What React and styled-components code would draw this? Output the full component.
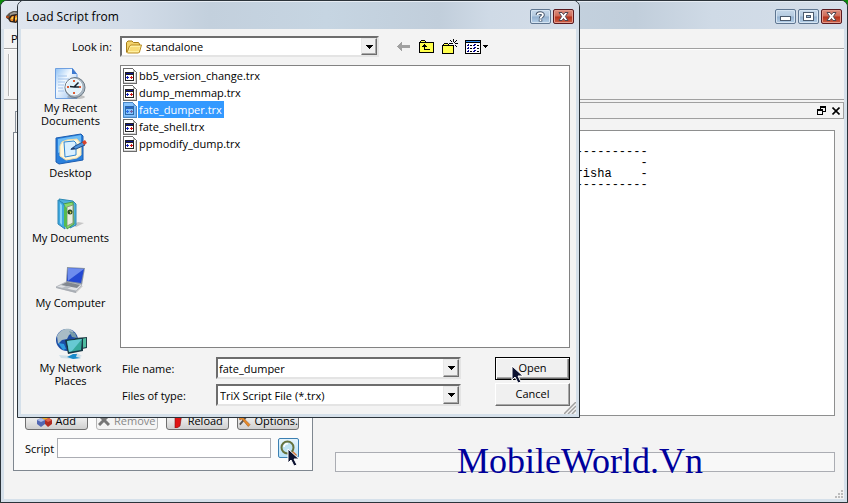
import React, { useState } from 'react';
import styled, { createGlobalStyle } from 'styled-components';

const GlobalStyle = createGlobalStyle`
  * {
    box-sizing: border-box;
  }

  body {
    margin: 0;
    background: #0a8a0a;
    color: #000;
    font-family: 'Open Sans', 'Liberation Sans', sans-serif;
    font-size: 11px;
    line-height: 13px;
  }

  button, input, select {
    margin: 0;
    padding: 0;
    font: inherit;
    color: inherit;
  }
`;

const Desktop = styled.div`
  position: relative;
  display: flex;
  min-height: 100vh;
`;

/* window frame */
const Window = styled.section`
  display: flex;
  flex-direction: column;
  flex: 1;
  border: 1px solid #2b333a;
  border-radius: 7px 7px 0 0;
  background: #d5e0ea;
  overflow: hidden;
`;

const DialogWindow = styled(Window)` /* dialog over the main window */
  position: absolute;
  top: 0;
  left: 17px;
  width: 563px;
  height: 418px;
`;

const TitleBar = styled.header`
  display: flex;
  align-items: center;
  gap: 2px;
  height: 28px;
  padding: 3px 5px 0 8px;
  box-shadow: inset 0 1px #e6ecf3;
  background: linear-gradient(90deg, #dfe5ee 0, #d2dce8 20%, #c3d0dd 34%, #c6d5e2 55%, #c1cedb 75%, #cfdae6 84%, #d5dee9 100%);
`;

const Title = styled.h1`
  flex: 1;
  margin: 0;
  font-size: 12px;
  font-weight: 400;
`;

const TitleButton = styled.button`
  display: flex;
  align-items: center;
  justify-content: center;
  width: 21px;
  height: 15px;
  border: 1px solid ${(props) => (props.$close ? '#5a1a20' : '#5f7691')};
  border-radius: 2px;
  box-shadow: inset 0 0 0 1px ${(props) => (props.$close ? '#e39a8c' : '#d5e4f2')};
  background: ${(props) =>
    props.$close
      ? 'linear-gradient(#dc8e7f 0, #cf6a56 48%, #b5301a 52%, #cc6046 100%)'
      : 'linear-gradient(#c6d8ea 0, #b4cae0 48%, #93b0cf 52%, #b5d0e8 100%)'};
`;

const WindowBody = styled.div`
  display: flex;
  flex-direction: column;
  flex: 1;
  margin: 0 3px 3px;
  background: #f3f3f3;
`;

/* main window */
const MenuBar = styled.nav`
  height: 20px;
  padding: 3px 7px;
  border-bottom: 1px solid #a0a0a0;
`;

const MenuItem = styled.button`
  border: 0;
  background: none;
`;

const ToolBar = styled.div`
  height: 51px;
  padding: 4px;
  border-top: 1px solid #fff;
  border-bottom: 1px solid #a0a0a0;
`;

const ToolBarGrip = styled.div`
  width: 2px;
  height: 42px;
  border-left: 1px solid #b4b4b4;
  border-right: 1px solid #fff;
`;

const Workspace = styled.div`
  position: relative;
  display: flex;
  flex: 1;
`;

const SidePanel = styled.div`
  display: flex;
  flex-direction: column;
  width: 300px;
  margin: 11px 9px 28px;
`;

const Tab = styled.div`
  width: 80px;
  height: 21px;
  margin-left: 2px;
  border: 1px solid #8a929c;
  border-bottom: 0;
  background: #eee;
`;

const TabPane = styled.div`
  display: flex;
  flex-direction: column;
  justify-content: flex-end;
  gap: 8px;
  flex: 1;
  padding: 0 13px 12px 11px;
  border: 1px solid #7f8790;
  background: #fbfbfb;
`;

const ButtonRow = styled.div`
  display: grid;
  grid-template-columns: repeat(4, 1fr);
  gap: 8px;
`;

const ActionButton = styled.button`
  display: flex;
  align-items: center;
  justify-content: center;
  gap: 4px;
  height: 20px;
  overflow: hidden;
  border: 1px solid #6f6f6f;
  border-radius: 3px;
  background: linear-gradient(#f4f4f4, #e8e8e8 50%, #cfcfcf);
  white-space: nowrap;

  &:disabled {
    border-color: #b5b5b5;
    background: #f4f4f4;
    color: #888;
  }
`;

const ScriptRow = styled.div`
  display: flex;
  align-items: center;
`;

const ScriptLabel = styled.label`
  width: 32px;
`;

const ScriptInput = styled.input`
  flex: 1;
  min-width: 0;
  height: 20px;
  padding: 0 4px;
  border: 1px solid #abadb3;
  background: #fff;
`;

const BrowseButton = styled.button`
  display: flex;
  align-items: center;
  justify-content: center;
  width: 21px;
  height: 20px;
  margin-left: 7px;
  border: 1px solid #3c7fb1;
  border-radius: 2px;
  background: linear-gradient(#e6f5fd, #b8e2f8);
`;

const OutputPanel = styled.div`
  display: flex;
  flex-direction: column;
  flex: 1;
  padding-top: 2px;
`;

const DockTitle = styled.div`
  display: flex;
  align-items: center;
  justify-content: flex-end;
  gap: 6px;
  height: 17px;
  padding-right: 3px;
  border: 1px solid #a0a0a0;
`;

const DockButton = styled.button`
  display: flex;
  border: 0;
  background: none;
`;

const Console = styled.pre`
  flex: 1;
  margin: 11px 9px 0 13px;
  padding: 16px 2px;
  border: 1px solid #8e8f8f;
  background: #fff;
  font-family: 'Liberation Mono', monospace;
  font-size: 12px;
  line-height: 11px;
`;

const Progress = styled.div`
  height: 20px;
  margin: 36px 9px 27px 13px;
  border: 1px solid #abadb3;
  background: #f8f8f8;
`;

const CornerGrip = styled.svg`
  position: absolute;
  right: 1px;
  bottom: 1px;
`;

/* file dialog */
const LookInRow = styled.div`
  display: flex;
  align-items: center;
  margin-top: 7px;
`;

const LookInLabel = styled.label`
  width: 99px;
  padding-right: 8px;
  text-align: right;
`;

const ComboFrame = styled.div`
  display: flex;
  align-items: center;
  flex: ${(props) => props.$flex || '1'};
  height: ${(props) => props.$height || '22px'};
  padding-left: ${(props) => props.$indent || '1px'};
  border: 2px solid;
  border-color: #6d6d6d #e4e4e4 #e4e4e4 #6d6d6d;
  background: #fff;
`;

const ComboSelect = styled.select`
  flex: 1;
  align-self: stretch;
  min-width: 0;
  padding-left: ${(props) => props.$indent || '1px'};
  border: 0;
  outline: 0;
  appearance: none;
  background: transparent;
`;

const ComboInput = styled.input`
  flex: 1;
  align-self: stretch;
  min-width: 0;
  border: 0;
  outline: 0;
  background: transparent;
`;

const ComboArrow = styled.span`
  display: flex;
  align-items: center;
  justify-content: center;
  align-self: stretch;
  width: 16px;
  border: 1px solid;
  border-color: #e8e8e8 #6d6d6d #6d6d6d #e8e8e8;
  box-shadow: inset -1px -1px #a8a8a8;
  background: #f0f0f0;
  pointer-events: none;
`;

const FolderTools = styled.div`
  display: flex;
  margin-left: 13px;
`;

const FolderToolButton = styled.button`
  display: flex;
  align-items: center;
  justify-content: center;
  gap: 2px;
  width: ${(props) => (props.$wide ? '30px' : '23px')};
  height: 21px;
  border: 0;
  background: none;
`;

const DialogMain = styled.div`
  display: flex;
  flex: 1;
  margin-top: 8px;
`;

const Places = styled.nav`
  display: flex;
  flex-direction: column;
  width: 99px;
  padding-top: 3px;
`;

const Place = styled.button`
  display: flex;
  flex-direction: column;
  align-items: center;
  gap: 1px;
  height: 65px;
  border: 0;
  background: none;
  white-space: pre;
`;

const FilePane = styled.div`
  display: flex;
  flex-direction: column;
  flex: 1;
  min-width: 0;
  gap: 9px;
  margin: 0 6px 8px 0;
`;

const FileList = styled.ul`
  flex: 1;
  margin: 0;
  padding: 1px;
  border: 1px solid #828282;
  background: #fff;
  list-style: none;
`;

const FileButton = styled.button`
  display: flex;
  align-items: center;
  gap: 1px;
  height: 17px;
  padding-left: 1px;
  border: 0;
  background: none;
`;

const FileName = styled.span`
  padding: 2px 2px 2px 1px;
  background: ${(props) => (props.$selected ? '#3399ff' : 'transparent')};
  color: ${(props) => (props.$selected ? '#fff' : '#000')};
`;

const DialogFooter = styled.div`
  display: flex;
  gap: 34px;
`;

const Fields = styled.div`
  display: flex;
  flex-direction: column;
  flex: 1;
  gap: 5px;
`;

const Field = styled.div`
  display: flex;
  align-items: center;
`;

const FieldLabel = styled.label`
  width: 96px;
  padding-left: 2px;
`;

const DialogButtons = styled.div`
  display: flex;
  flex-direction: column;
  gap: 3px;
  width: 75px;
`;

const DialogButton = styled.button`
  height: 23px;
  padding-bottom: 2px;
  border: 1px solid;
  border-color: ${(props) => (props.$primary ? '#000' : '#fff #6d6d6d #6d6d6d #fff')};
  box-shadow: ${(props) =>
    props.$primary
      ? 'inset 1px 1px #fff, inset -1px -1px #6d6d6d, inset -2px -2px #a8a8a8'
      : 'inset -1px -1px #a8a8a8'};
  background: #f0f0f0;
`;

const DialogGrip = styled.svg`
  position: absolute;
  right: 3px;
  bottom: 3px;
`;

/* overlays */
const Brand = styled.div`
  position: absolute;
  left: 457px;
  bottom: 22px;
  color: #00009c;
  font-family: 'Liberation Serif', serif;
  font-size: 36px;
  line-height: 40px;
`;

const Pointer = styled.svg`
  position: absolute;
  left: ${(props) => props.$x}px;
  top: ${(props) => props.$y}px;
  pointer-events: none;
`;

const CloseGlyph = () => (
  <svg width="11" height="9" viewBox="0 0 11 9">
    <path d="M1 .5h3l1.500 2 1.500-2h3L7.400 4.500l2.600 4H7l-1.500-2-1.500 2H1l2.600-4z" fill="#fff" stroke="#4f4650" />
  </svg>
);

const HelpGlyph = () => (
  <svg width="11" height="11" viewBox="0 0 11 11" fill="none">
    <path d="M2.500 4C2.500 1.500 8 1.500 8 4 8 5.500 5.500 5.500 5.500 7.500M5.500 8.500v2" stroke="#46566c" strokeWidth="3.600" />
    <path d="M2.500 4C2.500 1.500 8 1.500 8 4 8 5.500 5.500 5.500 5.500 7.500M5.500 8.500v1.500" stroke="#fff" strokeWidth="1.700" />
  </svg>
);

const MinimizeGlyph = () => (
  <svg width="11" height="9" viewBox="0 0 11 9">
    <rect x=".5" y="4.500" width="10" height="4" fill="#fff" stroke="#4b5a6d" />
  </svg>
);

const MaximizeGlyph = () => (
  <svg width="11" height="9" viewBox="0 0 11 9">
    <rect x=".5" y=".5" width="10" height="8" fill="#fff" stroke="#4b5a6d" />
    <rect x="3.500" y="3.500" width="4" height="2" fill="#9dbbd9" stroke="#4b5a6d" />
  </svg>
);

const AppIcon = () => (
  <svg width="16" height="14" viewBox="0 0 16 14" style={{ display: 'block' }}>
    <path d="M0 6l3-3 4-2h5l3 3v2H6L4 9H1z" fill="#5e5850" />
    <path d="M4 4l4-2 4 1-3 2-5 1z" fill="#a09a90" />
    <path d="M0 6h3v2H0z" fill="#a8481c" />
    <path d="M2 9l3-4 5-1 5 2-1 4-4 3-6-1z" fill="#33241a" />
    <path d="M4 9l2-3h2L7 11H5zM9 6l2-1v5l-2 2zM12 6h2v2l-2 2z" fill="#f08a22" />
    <path d="M5 9l1-2h1v2zM9 8l2-1v2l-2 1z" fill="#ffd24a" />
  </svg>
);

const DownArrow = () => (
  <svg width="7" height="4" viewBox="0 0 7 4" shapeRendering="crispEdges">
    <path d="M0 0h7v1H6v1H5v1H4v1H3V3H2V2H1V1H0z" />
  </svg>
);

const FolderIcon = () => (
  <svg width="16" height="14" viewBox="0 0 16 14">
    <path d="M.5 12V2.500L2 1h4l1.500 1.500h5L13.500 4v8z" fill="#f3d36a" stroke="#a67c18" />
    <path d="M1 12.500L3.500 6 5 5h10.500l-2 7-1 1H1.500z" fill="#fff0a0" stroke="#b98b22" />
    <path d="M3 11l1.500-4H14l-1.500 4z" fill="#f8dc78" />
  </svg>
);

const BackIcon = () => (
  <svg width="13" height="9" viewBox="0 0 13 9" shapeRendering="crispEdges">
    <path d="M0 4h1V3h1V2h1V1h1V0h1v3h8v3H5v3H4V8H3V7H2V6H1V5H0z" fill="#a0a0a0" />
  </svg>
);

const UpFolderIcon = () => (
  <svg width="15" height="13" viewBox="0 0 15 13" shapeRendering="crispEdges">
    <path d="M0 2h1V1h1V0h4v1h1v1h8v11H0z" />
    <path d="M1 3h13v9H1zM2 1h4v1H2z" fill="#ffff4d" />
    <path d="M5 4h1v1h1v1h1v1H6v2h5v1H5V7H3V6h1V5h1z" />
  </svg>
);

const NewFolderIcon = () => (
  <svg width="16" height="15" viewBox="0 0 16 15" shapeRendering="crispEdges">
    <path d="M0 6h1V5h1V4h4v1h1v1h5v9H0z" />
    <path d="M1 7h10v7H1zM2 5h4v1H2z" fill="#ffff4d" />
    <path d="M11 0h1v3h-1zM8 1h1v1H8zM9 2h1v1H9zM14 1h1v1h-1zM13 2h1v1h-1zM7 4h3v1H7zM13 4h3v1h-3zM10 4h1v1h-1zM12 3h1v1h-1zM13 6h1v1h-1zM14 7h1v1h-1zM11 6h1v3h-1zM9 6h1v1H9z" />
  </svg>
);

const ViewIcon = () => (
  <svg width="16" height="14" viewBox="0 0 16 14" shapeRendering="crispEdges">
    <path d="M0 0h16v14H0z" />
    <path d="M1 3h14v10H1z" fill="#fff" />
    <path d="M1 1h14v1H1z" fill="#2f8df0" />
    <path d="M3 4h1v2H2V5h1zM9 4h2v1h-1v1H8V5h1zM3 7h1v2H2V8h1zM9 7h2v1h-1v1H8V8h1zM3 10h1v2H2v-1h1zM9 10h2v1h-1v1H8v-1h1z" fill="#00008c" />
    <path d="M5 5h2v1H5zM12 5h2v1h-2zM5 8h2v1H5zM12 8h2v1h-2zM5 11h2v1H5zM12 11h2v1h-2z" />
  </svg>
);

const MenuArrow = () => (
  <svg width="5" height="3" viewBox="0 0 5 3" shapeRendering="crispEdges">
    <path d="M0 0h5v1H4v1H3v1H2V2H1V1H0z" />
  </svg>
);

const ScriptFileIcon = ({ selected }) => (
  <svg width="14" height="16" viewBox="0 0 14 16" shapeRendering="crispEdges">
    <path d="M0 0h10v1h1v1h1v1h1v1h1v12H0z" fill="#6c6c6c" />
    <path d="M1 1h9v3h3v11H1z" fill="#fff" />
    <path d="M10 2h1v1h1v1h-2z" fill="#bbb" />
    <path d="M12 5h1v10H1v-1h11z" fill="#d4d4d4" />
    <path d="M2 4h9v9H2z" fill="#222" />
    <path d="M3 5h7v1H3z" fill="#0a128c" />
    <path d="M3 7h7v5H3z" fill="#fff" />
    <path d="M3 9h1V8h1v1h1v1H5v1H4v-1H3z" fill="#1c28c0" />
    <path d="M7 9h1V8h1v1h1v1H9v1H8v-1H7z" fill="#d01818" />
    {selected && <path d="M0 0h10v1h1v1h1v1h1v1h1v12H0z" fill="#3399ff" fillOpacity=".6" />}
  </svg>
);

const RecentIcon = () => (
  <svg width="32" height="32" viewBox="0 0 32 32">
    <defs>
      <linearGradient id="page" x2="1" y2="1">
        <stop stopColor="#8fc1f4" />
        <stop offset=".4" stopColor="#f4faff" />
        <stop offset="1" stopColor="#8fb9ec" />
      </linearGradient>
    </defs>
    <path d="M.5.500h17l4.500 6v24H.5z" fill="url(#page)" stroke="#6fa0e0" />
    <path d="M17 0v6h5z" fill="#3f7ad0" />
    <path d="M3 8h9M3 11h11M3 14h7M3 17h6M3 20h5M3 23h6" stroke="#a3c4ec" />
    <ellipse cx="21" cy="29" rx="9" ry="2" fill="#777" opacity=".4" />
    <circle cx="20" cy="19.500" r="10" fill="#a9b6c2" stroke="#6b7985" />
    <circle cx="19" cy="19" r="8" fill="#e2f2fc" stroke="#f8fbfd" />
    <path d="M19 12v2M19 24v2M12 19h2M24 19h2" stroke="#dd5b35" strokeWidth="2" />
    <path d="M23.500 14.500L19 19l-4-.5M19 19h5" fill="none" stroke="#18222d" strokeWidth="1.500" />
  </svg>
);

const DesktopIcon = () => (
  <svg width="32" height="32" viewBox="0 0 32 32">
    <path d="M1 5L26 1l2 2v24L4 31l-3-2z" fill="#2a80dc" stroke="#1b5cb0" />
    <path d="M3 6l23-4v8L3 20z" fill="#6dbcf6" />
    <path d="M7 9l5-2 10-1 4 5v11l-4 3-11 2-6-4V13z" fill="#fff8dc" stroke="#f2dca6" />
    <path d="M9 9l10-1 2 2v12l-11 2z" fill="#d9f0ff" stroke="#2f86d2" />
    <path d="M16 16l4-3 8-4 2 3-9 4z" fill="#4d93dc" stroke="#24508c" />
    <path d="M27 9l3-2 2 3-3 2z" fill="#d9432b" />
    <path d="M15 17l4-3 1 2z" fill="#1f3c6a" />
  </svg>
);

const DocumentsIcon = () => (
  <svg width="32" height="32" viewBox="0 0 32 32">
    <path d="M21 29l8-4-6-1-5 3z" fill="#999" opacity=".5" />
    <path d="M4 1l14 2 3 3v21l-6 3z" fill="#4fb0dc" stroke="#2f8ab4" />
    <path d="M8 6l10-2 1 22-7 5z" fill="#8bd96a" stroke="#4b9b48" />
    <path d="M12 9l6-2v18l-6 3z" fill="#e9eee0" stroke="#8a9a7c" />
    <circle cx="15" cy="14" r="2.500" fill="#274c24" />
    <path d="M14.500 13l2 1-1 2z" fill="#e9d661" />
    <path d="M3 2l5 3 2 4v22l-7-5z" fill="#3fa9e0" stroke="#2f86b4" />
    <path d="M5 5l2 2v20l-2-2z" fill="#8bd6f6" />
    <path d="M9 8l3 2v20l-3-2z" fill="#56bb50" />
  </svg>
);

const ComputerIcon = () => (
  <svg width="32" height="32" viewBox="0 0 32 32">
    <path d="M2 25l10-5 16 3-7 7z" fill="#666" opacity=".3" />
    <path d="M12 4l18 1-3 17-16-3z" fill="#8893a4" />
    <path d="M13 5l16 1-3 14-14-2z" fill="#2449d3" />
    <path d="M13 5l16 1-15 11-1 1z" fill="#6d8cee" />
    <path d="M1 24l10-5 16 3-6 6z" fill="#dfe1e4" stroke="#b5b9bf" />
    <path d="M6 22l6-3 13 3-3 3z" fill="#81878f" />
    <path d="M7 25l4-2 5 1-4 2z" fill="#b7bdc4" />
    <path d="M1 24l20 4v2L1 25z" fill="#a8adb4" />
  </svg>
);

const NetworkIcon = () => (
  <svg width="32" height="32" viewBox="0 0 32 32">
    <circle cx="12" cy="12" r="11" fill="#1c4ca4" />
    <path d="M2 8C5 2 10 0 15 1l4 3-5 3-2 4-5 1-4 4z" fill="#a8bcc6" />
    <path d="M14 3l6 2 2 5-5-1z" fill="#769ba9" />
    <path d="M3 15l6 1 2 5-3 1z" fill="#2e9adf" />
    <path d="M20 10l12-1v11l-10 2z" fill="#213f49" />
    <path d="M22 12l9-2v9l-8 2z" fill="#4fbda0" />
    <path d="M10 12l18-2v13l-15 3z" fill="#163745" />
    <path d="M12 13l15-2-1 11-12 2z" fill="#36a99c" />
    <path d="M12 13l15-2-10 12-3 1z" fill="#66c9d3" />
    <path d="M4 27l12 1 6-3 5 3-8 3-13-1z" fill="#cfdfe8" />
    <path d="M12 29l6-3h4l-1 3 5 1-8 1z" fill="#1a8bcb" />
  </svg>
);

const AddIcon = () => (
  <svg width="15" height="14" viewBox="0 0 15 14">
    <path d="M4 2l4-2 4 2v4l-4 2-4-2z" fill="#e8ad28" />
    <path d="M0 7l4-2 4 2v4l-4 3-4-3z" fill="#5267b3" />
    <path d="M0 7l4-2 4 2-4 2z" fill="#adbbe7" />
    <path d="M8 7l4-2 3 2v4l-4 3-3-3z" fill="#b02a20" />
    <path d="M8 7l4-2 3 2-4 2z" fill="#e0634b" />
  </svg>
);

const RemoveIcon = () => (
  <svg width="12" height="12" viewBox="0 0 12 12">
    <path d="M1 1l10 10M11 1L1 11" stroke="#777" strokeWidth="3" />
  </svg>
);

const ReloadIcon = () => (
  <svg width="12" height="15" viewBox="0 0 12 15">
    <path d="M3 0h7L8 13l-3 2H3z" fill="#e01414" stroke="#841010" strokeWidth=".6" />
  </svg>
);

const OptionsIcon = () => (
  <svg width="14" height="14" viewBox="0 0 14 14">
    <path d="M11 1L2 12" stroke="#555" strokeWidth="2" />
    <path d="M1 4l3-3 3 1-2 2 8 8-2 2-7-8-2 1z" fill="#e88a28" stroke="#9f5617" strokeWidth=".6" />
  </svg>
);

const SearchIcon = () => (
  <svg width="18" height="17" viewBox="0 0 18 17">
    <path d="M11 11l5 5" stroke="#d77736" strokeWidth="3" />
    <circle cx="7.500" cy="7.500" r="6" fill="#bfe4f3" stroke="#66733d" strokeWidth="2" />
    <path d="M4 7c0-2 2-4 4-3" fill="none" stroke="#fff" strokeWidth="1.500" />
  </svg>
);

const Cursor = ({ x, y }) => (
  <Pointer $x={x} $y={y} width="13" height="20" viewBox="0 0 13 20">
    <path d="M1 1v14l3-3 3 6 3-1-3-6h5z" fill="#0c1230" stroke="#fff" />
  </Pointer>
);

const places = [
  { label: 'My Recent\nDocuments', Icon: RecentIcon },
  { label: 'Desktop', Icon: DesktopIcon },
  { label: 'My Documents', Icon: DocumentsIcon },
  { label: 'My Computer', Icon: ComputerIcon },
  { label: 'My Network\nPlaces', Icon: NetworkIcon },
];

const files = [
  'bb5_version_change.trx',
  'dump_memmap.trx',
  'fate_dumper.trx',
  'fate_shell.trx',
  'ppmodify_dump.trx',
];

const consoleLines = [
  '-'.repeat(43),
  '-'.padStart(43),
  'risha    -'.padStart(43),
  '-'.repeat(43),
];

function LoadDialog() {
  const [selected, setSelected] = useState('fate_dumper.trx');
  const [name, setName] = useState('fate_dumper');

  const handleSelect = (file) => {
    setSelected(file);
    setName(file.replace('.trx', ''));
  };

  return (
    <DialogWindow role="dialog" aria-label="Load Script from">
      <TitleBar>
        <Title>Load Script from</Title>
        <TitleButton aria-label="Help"><HelpGlyph /></TitleButton>
        <TitleButton $close aria-label="Close"><CloseGlyph /></TitleButton>
      </TitleBar>

      <WindowBody>
        <LookInRow>
          <LookInLabel htmlFor="look-in">Look in:</LookInLabel>
          <ComboFrame $flex="0 1 259px" $height="21px" $indent="4px">
            <FolderIcon />
            <ComboSelect id="look-in" $indent="4px">
              <option>standalone</option>
            </ComboSelect>
            <ComboArrow><DownArrow /></ComboArrow>
          </ComboFrame>
          <FolderTools>
            <FolderToolButton aria-label="Back" disabled><BackIcon /></FolderToolButton>
            <FolderToolButton aria-label="Up one level"><UpFolderIcon /></FolderToolButton>
            <FolderToolButton aria-label="New folder"><NewFolderIcon /></FolderToolButton>
            <FolderToolButton $wide aria-label="View"><ViewIcon /><MenuArrow /></FolderToolButton>
          </FolderTools>
        </LookInRow>

        <DialogMain>
          <Places>
            {places.map(({ label, Icon }) => (
              <Place key={label}>
                <Icon />
                {label}
              </Place>
            ))}
          </Places>

          <FilePane>
            <FileList>
              {files.map((file) => (
                <li key={file}>
                  <FileButton onClick={() => handleSelect(file)}>
                    <ScriptFileIcon selected={file === selected} />
                    <FileName $selected={file === selected}>{file}</FileName>
                  </FileButton>
                </li>
              ))}
            </FileList>

            <DialogFooter>
              <Fields>
                <Field>
                  <FieldLabel htmlFor="file-name">File name:</FieldLabel>
                  <ComboFrame>
                    <ComboInput id="file-name" value={name} onChange={(e) => setName(e.target.value)} />
                    <ComboArrow><DownArrow /></ComboArrow>
                  </ComboFrame>
                </Field>
                <Field>
                  <FieldLabel htmlFor="file-type">Files of type:</FieldLabel>
                  <ComboFrame>
                    <ComboSelect id="file-type">
                      <option>TriX Script File (*.trx)</option>
                    </ComboSelect>
                    <ComboArrow><DownArrow /></ComboArrow>
                  </ComboFrame>
                </Field>
              </Fields>
              <DialogButtons>
                <DialogButton $primary>Open</DialogButton>
                <DialogButton>Cancel</DialogButton>
              </DialogButtons>
            </DialogFooter>
          </FilePane>
        </DialogMain>
      </WindowBody>

      <DialogGrip width="12" height="12" viewBox="0 0 12 12">
        <path d="M0 12L12 0M4 12l8-8M8 12l4-4" stroke="#a0a0a0" strokeWidth="1.500" />
      </DialogGrip>
    </DialogWindow>
  );
}

const TitleIcon = styled.div`
  flex: 1;
  margin-left: -3px;
`;

export default function App() {
  const [script, setScript] = useState('');

  return (
    <Desktop>
      <GlobalStyle />
      <Window>
        <TitleBar>
          <TitleIcon><AppIcon /></TitleIcon>
          <TitleButton aria-label="Minimize"><MinimizeGlyph /></TitleButton>
          <TitleButton aria-label="Maximize"><MaximizeGlyph /></TitleButton>
          <TitleButton $close aria-label="Close"><CloseGlyph /></TitleButton>
        </TitleBar>

        <WindowBody>
          <MenuBar>
            <MenuItem>P</MenuItem>
          </MenuBar>
          <ToolBar>
            <ToolBarGrip />
          </ToolBar>

          <Workspace>
            <SidePanel>
              <Tab />
              <TabPane>
                <ButtonRow>
                  <ActionButton><AddIcon />Add</ActionButton>
                  <ActionButton disabled><RemoveIcon />Remove</ActionButton>
                  <ActionButton><ReloadIcon />Reload</ActionButton>
                  <ActionButton><OptionsIcon />Options.</ActionButton>
                </ButtonRow>
                <ScriptRow>
                  <ScriptLabel htmlFor="script">Script</ScriptLabel>
                  <ScriptInput id="script" value={script} onChange={(e) => setScript(e.target.value)} />
                  <BrowseButton aria-label="Browse"><SearchIcon /></BrowseButton>
                </ScriptRow>
              </TabPane>
            </SidePanel>

            <OutputPanel>
              <DockTitle>
                <DockButton aria-label="Float">
                  <svg width="9" height="9" viewBox="0 0 9 9" shapeRendering="crispEdges">
                    <path d="M3 0h6v6H6v3H0V3h3zM4 2v1h2v2h2V2zM1 5v3h4V5z" fillRule="evenodd" />
                  </svg>
                </DockButton>
                <DockButton aria-label="Close panel">
                  <svg width="8" height="8" viewBox="0 0 8 8">
                    <path d="M.5.5l7 7M7.500.5l-7 7" stroke="#000" strokeWidth="1.600" />
                  </svg>
                </DockButton>
              </DockTitle>
              <Console>{consoleLines.join('\n')}</Console>
              <Progress role="progressbar" aria-label="Progress" />
            </OutputPanel>

            <CornerGrip width="8" height="8" viewBox="0 0 8 8" shapeRendering="crispEdges">
              <path d="M6 0h2v2H6zM3 3h2v2H3zM6 3h2v2H6zM0 6h2v2H0zM3 6h2v2H3zM6 6h2v2H6z" fill="#bcbcbc" />
            </CornerGrip>
          </Workspace>
        </WindowBody>
      </Window>

      <LoadDialog />
      <Brand>MobileWorld.Vn</Brand>
      <Cursor x={511} y={365} />
      <Cursor x={287} y={448} />
    </Desktop>
  );
}
